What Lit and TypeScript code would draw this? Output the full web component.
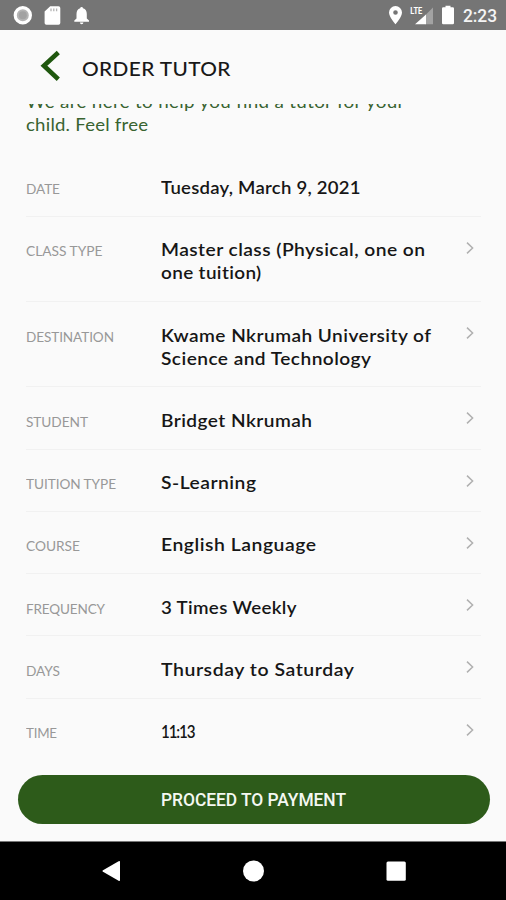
import { LitElement, html, css, svg } from "lit";
import { customElement, property, query } from "lit/decorators.js";

interface Line {
  text: string;
  width: number;
}

interface Field {
  label: Line;
  value: Line[];
  link: boolean;
}

const l = (text: string, width: number): Line => ({ text, width });

const FIELDS: Field[] = [
  { label: l("DATE", 34), value: [l("Tuesday, March 9, 2021", 199.5)], link: false },
  { label: l("CLASS TYPE", 76.5), value: [l("Master class (Physical, one on", 264), l("one tuition)", 100.5)], link: true },
  { label: l("DESTINATION", 88), value: [l("Kwame Nkrumah University of", 270), l("Science and Technology", 210)], link: true },
  { label: l("STUDENT", 62), value: [l("Bridget Nkrumah", 151)], link: true },
  { label: l("TUITION TYPE", 90), value: [l("S-Learning", 95)], link: true },
  { label: l("COURSE", 54), value: [l("English Language", 155)], link: true },
  { label: l("FREQUENCY", 79), value: [l("3 Times Weekly", 135.5)], link: true },
  { label: l("DAYS", 34), value: [l("Thursday to Saturday", 193)], link: true },
  { label: l("TIME", 31), value: [l("11:13", 34.5)], link: true },
];

/** One line of text, stretched and tracked in equal parts to fill the given width. */
@customElement("fit-line")
export class FitLine extends LitElement {
  static styles = css`
    :host { display: block; white-space: nowrap; }
    span { display: inline-block; vertical-align: top; transform-origin: 0 50%; }
  `;

  @property() text = "";
  @property({ type: Number }) width = 0;
  @query("span") span!: HTMLSpanElement;

  updated() {
    const style = this.span.style;
    style.letterSpacing = "0px";
    style.transform = "none";
    const natural = this.span.getBoundingClientRect().width;
    const stretch = 1 + (this.width / natural - 1) * 0.6;
    const gaps = Math.max(1, this.text.length - 1);
    style.letterSpacing = `${(this.width / stretch - natural) / gaps}px`;
    style.transform = `scaleX(${stretch})`;
  }

  render() {
    return html`<span>${this.text}</span>`;
  }
}

const line = (t: Line) => html`<fit-line .text=${t.text} .width=${t.width}></fit-line>`;

@customElement("status-bar")
export class StatusBar extends LitElement {
  static styles = css`
    :host {
      display: flex; justify-content: space-between; height: 30px;
      background: #757575; color: #fff; flex: none;
    }
    .group { display: block; height: 30px; flex: none; }
    .right { display: flex; }
    .clock {
      font: 500 17.5px/32px Roboto, sans-serif; width: 43px; color: #f4f4f4;
    }
    .lte { font: 700 9.5px "Roboto", sans-serif; fill: #fff; }
  `;

  render() {
    return html`
      <svg class="group" width="100" height="30" viewBox="0 0 100 30">
        <circle cx="22.8" cy="15.3" r="7.6" fill="#b4b4b4" stroke="#fff" stroke-width="3.2" />
        <circle cx="22.8" cy="15.3" r="4" fill="#a2a2a2" />
        <path fill="#fff" d="M50.2 6.2H58.5a1.8 1.8 0 0 1 1.8 1.8V23a1.8 1.8 0 0 1-1.8 1.8H46.4a1.8 1.8 0 0 1-1.8-1.8V11.6z" />
        <path stroke="#b4b4b4" stroke-width="1.3" d="M51 8.5v2.8M53.8 8.5v2.8M56.6 8.5v2.8" />
        <path fill="#fff" d="M81.6 7a1.4 1.4 0 0 1 1.4 1.3c2.6.7 3.8 2.9 3.8 5.6v4.5l2.2 2.2v1.2H74.3v-1.2l2.2-2.2v-4.5c0-2.7 1.2-4.9 3.7-5.6A1.4 1.4 0 0 1 81.6 7zM79.9 22.6h3.5a1.75 1.75 0 0 1-3.5 0z" />
      </svg>
      <div class="right">
        <svg class="group" width="77" height="30" viewBox="386 0 77 30">
          <path fill="#fff" fill-rule="evenodd" d="M395.5 6a6.5 6.5 0 0 1 6.5 6.5c0 4.7-6.5 11.7-6.5 11.7s-6.5-7-6.5-11.7A6.5 6.5 0 0 1 395.5 6zm0 4.2a2.3 2.3 0 1 0 0 4.6 2.3 2.3 0 0 0 0-4.6z" />
          <path fill="#a3a3a3" d="M433 7.5V24.2H425.5V15z" />
          <path fill="#fff" d="M426 14.5V24.2H415z" />
          <text class="lte" x="410.3" y="14" textLength="12" lengthAdjust="spacingAndGlyphs">LTE</text>
          <path fill="#fff" d="M445.5 5.8h5v1.5h2.2a1.3 1.3 0 0 1 1.3 1.3V23a1.3 1.3 0 0 1-1.3 1.3h-9.4A1.3 1.3 0 0 1 442 23V8.6a1.3 1.3 0 0 1 1.3-1.3h2.2z" />
        </svg>
        <fit-line class="clock" .text=${"2:23"} .width=${34}></fit-line>
      </div>
    `;
  }
}

@customElement("field-row")
export class FieldRow extends LitElement {
  static styles = css`
    :host {
      display: flex; align-items: flex-start; box-sizing: border-box;
      padding: 21.6px 6px 16.7px 0; border-bottom: 1px solid #f1f1f1;
    }
    :host([last]) { border-color: transparent; }
    .label {
      width: 135px; flex: none; margin: 1px 0 -2px;
      font: 400 13.8px/23px Lato, sans-serif; color: #989898;
    }
    .value {
      flex: 1; min-width: 0;
      font: 600 17.8px/23px Lato, sans-serif; color: #161616;
    }
    .chevron { flex: none; margin-top: 2.4px; }
  `;

  @property({ attribute: false }) field!: Field;

  render() {
    const { label, value, link } = this.field;
    return html`
      <div class="label">${line(label)}</div>
      <div class="value">${value.map(line)}</div>
      ${link
        ? html`<svg class="chevron" width="10" height="14" viewBox="0 0 10 14">
            ${svg`<path d="M2 1.6L7.6 7L2 12.4" fill="none" stroke="#b0b0b0" stroke-width="1.5" />`}
          </svg>`
        : null}
    `;
  }
}

@customElement("app-root")
export class AppRoot extends LitElement {
  static styles = css`
    :host {
      display: flex; flex-direction: column; height: 900px; width: 100%;
      overflow: hidden; background: #fafafa; font-family: Lato, sans-serif;
    }
    .header {
      height: 74px; flex: none; display: flex; align-items: flex-start;
      box-sizing: border-box; padding: 20px 0 0 40px; gap: 22px;
    }
    .title { font: 500 20px/24px Lato, sans-serif; color: #181818; padding-top: 6px; }
    .scroll { flex: 1; min-height: 0; overflow: hidden; padding: 0 25px 0 26px; }
    .intro {
      margin: -13.6px 0 18px;
      font: 400 17.8px/23px Lato, sans-serif; color: #386330;
    }
    .pay {
      flex: none; height: 49px; margin: 0 16px 17px 17.5px;
      border: 0; border-radius: 25px; background: #2d5b1a; color: #f4f8f2;
      display: flex; justify-content: center; padding: 0;
      font: 500 17.5px/51px Roboto, sans-serif;
    }
    .nav { flex: none; display: block; width: 100%; height: 59px; background: #000; }
  `;

  render() {
    return html`
      <status-bar></status-bar>
      <div class="header">
        <svg width="20" height="32" viewBox="0 0 20 32">
          <path d="M18.3 2.5L3.9 15.8L18.3 29.3" fill="none" stroke="#1f570e" stroke-width="4.6" />
        </svg>
        <div class="title">${line(l("ORDER TUTOR", 148.5))}</div>
      </div>
      <div class="scroll">
        <div class="intro">
          ${line(l("We are here to help you find a tutor for your", 378))}
          ${line(l("child. Feel free", 122))}
        </div>
        ${FIELDS.map((f, i) => html`<field-row .field=${f} ?last=${i === FIELDS.length - 1}></field-row>`)}
      </div>
      <button class="pay">${line(l("PROCEED TO PAYMENT", 185))}</button>
      <svg class="nav" viewBox="0 841 506 59">
        <rect y="841" width="506" height="1" fill="#777" />
        <path d="M103 870.2L118.6 861.3Q120 860.6 120 862V880Q120 881.4 118.6 880.7L103 871.8Q101.6 871 103 870.2Z" fill="#fff" />
        <circle cx="253.5" cy="871" r="10.5" fill="#fff" />
        <rect x="386.5" y="861.5" width="19.3" height="19.3" rx="1.5" fill="#fff" />
      </svg>
    `;
  }
}
